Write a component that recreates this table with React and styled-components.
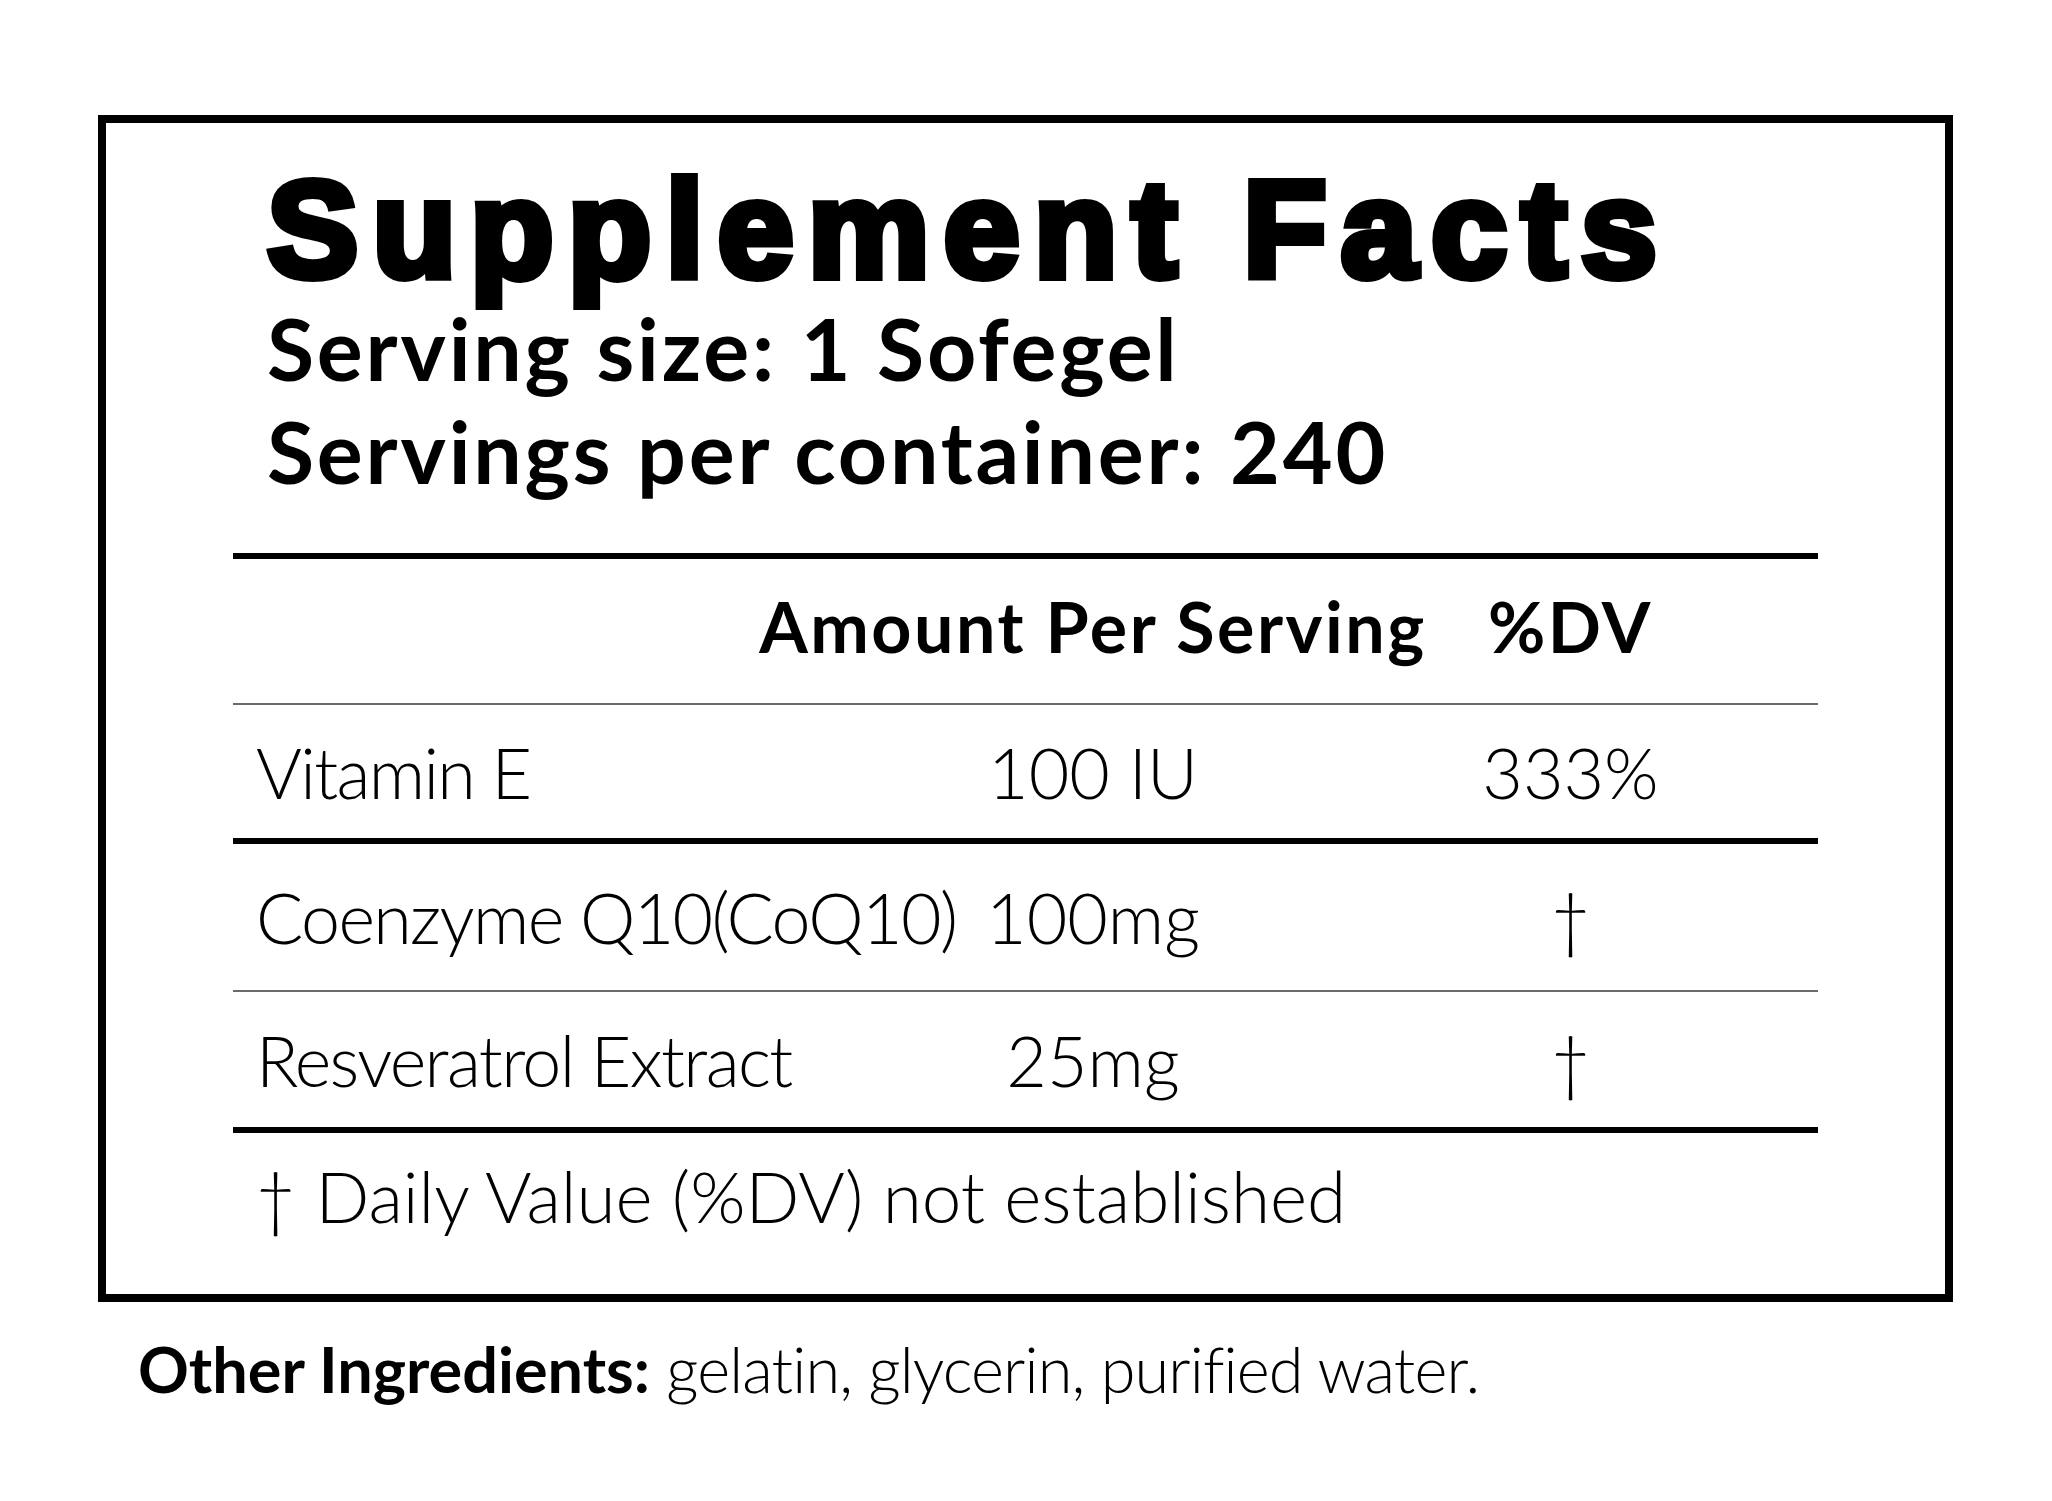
import React from 'react';
import styled, { createGlobalStyle } from 'styled-components';

const GlobalStyle = createGlobalStyle`
  html, body {
    margin: 0;
    padding: 0;
    background: #fff;
  }
  body {
    font-family: Lato, 'Open Sans', sans-serif;
    color: #000;
  }
`;

const Page = styled.main`
  box-sizing: border-box;
  width: 2052px;
  min-height: 1501px;
  padding: 115px 0 0 98px;
`;

const Panel = styled.section`
  box-sizing: border-box;
  width: 1855px;
  height: 1187px;
  border: 8px solid #000;
  padding: 37px 127px 0;
`;

const Heading = styled.header`
  padding-left: 34px;
  margin-bottom: 51px;
`;

const Title = styled.h1`
  margin: 0;
  font-family: 'Liberation Sans', Arial, sans-serif;
  font-weight: 700;
  font-size: 137px;
  line-height: 140px;
  letter-spacing: 14px;
  -webkit-text-stroke: 8px #000;
`;

const SubLine = styled.p`
  margin: 0;
  font-weight: 700;
  font-size: 86px;
  line-height: 103px;
  letter-spacing: 2.8px;

  &:first-of-type {
    margin-top: -4px;
  }
`;

const Table = styled.div`
  border-top: 6px solid #000;
`;

const Row = styled.div`
  display: grid;
  grid-template-columns: 630px 460px 1fr;
  align-items: center;
  box-sizing: border-box;
  height: ${(p) => p.$h}px;
  padding-bottom: ${(p) => p.$lift || 0}px;
  border-bottom: ${(p) => (p.$rule === 'thick' ? '6px solid #000' : '2px solid #6b6b6b')};
  font-size: 70px;
  font-weight: ${(p) => (p.$head ? 700 : 300)};
  letter-spacing: ${(p) => (p.$head ? '2.5px' : '0')};
  line-height: 1.2;
`;

const Name = styled.div`
  padding-left: 23px;
  white-space: nowrap;
  letter-spacing: -1.65px;
`;

const Cell = styled.div`
  display: flex;
  justify-content: center;
  white-space: nowrap;
`;

const Footnote = styled.p`
  margin: 20px 0 0 22px;
  font-size: 71px;
  font-weight: 300;
  line-height: 1.2;
`;

const Ingredients = styled.p`
  margin: 29px 0 0 40px;
  font-size: 63px;
  font-weight: 300;
  line-height: 1.2;
  letter-spacing: -0.85px;
  font-variant-ligatures: no-common-ligatures;

  strong {
    font-weight: 700;
    letter-spacing: 0;
  }
`;

const rows = [
  { name: 'Vitamin E', amount: '100 IU', dv: '333%', h: 139, rule: 'thick' },
  { name: 'Coenzyme Q10(CoQ10)', amount: '100mg', dv: '†', h: 148, rule: 'thin' },
  { name: 'Resveratrol Extract', amount: '25mg', dv: '†', h: 141, rule: 'thick' },
];

const App = () => (
  <>
    <GlobalStyle />
    <Page>
      <Panel>
        <Heading>
          <Title>Supplement Facts</Title>
          <SubLine>Serving size: 1 Sofegel</SubLine>
          <SubLine>Servings per container: 240</SubLine>
        </Heading>

        <Table>
          <Row $head $h={146} $lift={11} $rule="thin">
            <Name />
            <Cell>Amount Per Serving</Cell>
            <Cell>%DV</Cell>
          </Row>
          {rows.map((r) => (
            <Row key={r.name} $h={r.h} $rule={r.rule}>
              <Name>{r.name}</Name>
              <Cell>{r.amount}</Cell>
              <Cell>{r.dv}</Cell>
            </Row>
          ))}
        </Table>

        <Footnote>† Daily Value (%DV) not established</Footnote>
      </Panel>

      <Ingredients>
        <strong>Other Ingredients:</strong> gelatin, glycerin, purified water.
      </Ingredients>
    </Page>
  </>
);

export default App;
